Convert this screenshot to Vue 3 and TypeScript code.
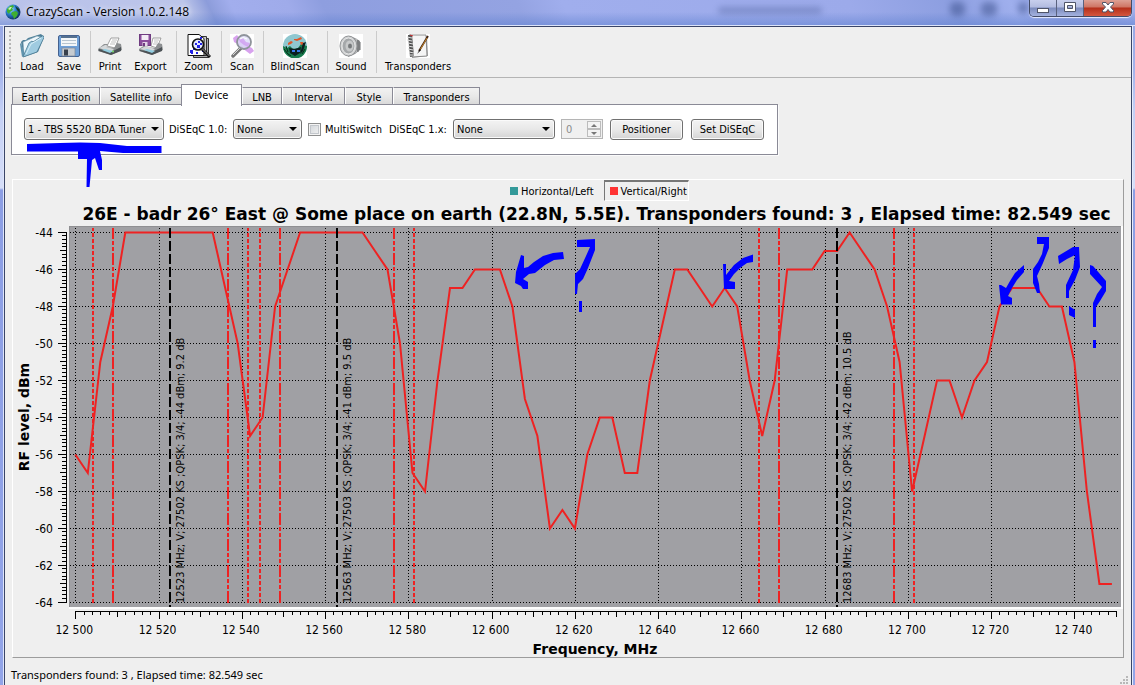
<script setup lang="ts">
import { ref } from 'vue'

interface Tab { label: string; active?: boolean }
interface Marker { x: number; kind: 'dash' | 'dashdot' }
interface Transponder { x: number; text: string }

const tabs: Tab[] = [
  { label: 'Earth position' },
  { label: 'Satellite info' },
  { label: 'Device', active: true },
  { label: 'LNB' },
  { label: 'Interval' },
  { label: 'Style' },
  { label: 'Transponders' },
]

const tuner = ref('1 - TBS 5520 BDA Tuner')
const diseqc10 = ref('None')
const diseqc1x = ref('None')
const multiSwitch = ref(false)
const position = ref(0)

const START = 12500
const freqX = (f: number): number => 75.3 + (f - START) * 4.163
const levelY = (l: number): number => 232.5 + (-44 - l) * 18.5

// One sample every 3 MHz
const levels: number[] = [
  -56, -57, -51, -48, -44, -44, -44, -44, -44, -44, -44, -44, -47, -50, -55, -54, -48, -46, -44, -44, -44,
  -44, -44, -44, -45, -46, -50, -57, -58, -52, -47, -47, -46, -46, -46, -48, -53, -55, -60, -59, -60,
  -56, -54, -54, -57, -57, -52, -49, -46, -46, -47, -48, -47, -48, -52, -55, -52, -46, -46, -46, -45,
  -45, -44, -45, -46, -48, -51, -58, -55, -52, -52, -54, -52, -51, -48, -47, -47, -47, -48, -48, -51,
  -58, -63, -63,
]
const trace = levels.map((l, i) => `${freqX(START + i * 3).toFixed(1)},${levelY(l).toFixed(1)}`).join(' ')

const xMajor = Array.from({ length: 13 }, (_, i) => START + i * 20)
const xTicks = Array.from({ length: 126 }, (_, i) => START + i * 2).map((f) => ({
  x: Math.round(freqX(f)),
  len: f % 20 === 0 ? 8 : f % 10 === 0 ? 6 : 4,
}))
const yMajor = Array.from({ length: 11 }, (_, i) => -44 - i * 2)
const yTicks = Array.from({ length: 101 }, (_, i) => ({
  y: Math.round(levelY(-44 - i / 5)),
  len: i % 10 === 0 ? 8 : i % 5 === 0 ? 6 : 4,
}))
const freqLabel = (f: number): string => `${Math.floor(f / 1000)} ${String(f % 1000).padStart(3, '0')}`

const markers: Marker[] = [
  { x: 93, kind: 'dash' }, { x: 113, kind: 'dashdot' },
  { x: 228, kind: 'dashdot' }, { x: 248, kind: 'dash' },
  { x: 260, kind: 'dash' }, { x: 280, kind: 'dashdot' },
  { x: 394, kind: 'dashdot' }, { x: 414, kind: 'dash' },
  { x: 759, kind: 'dash' }, { x: 779, kind: 'dashdot' },
  { x: 894, kind: 'dashdot' }, { x: 914, kind: 'dash' },
]
const transponders: Transponder[] = [
  { x: 170, text: '12523 MHz; V; 27502 KS ;QPSK; 3/4; -44 dBm; 9.2 dB' },
  { x: 337, text: '12563 MHz; V; 27503 KS ;QPSK; 3/4; -41 dBm; 9.5 dB' },
  { x: 837, text: '12683 MHz; V; 27502 KS ;QPSK; 3/4; -42 dBm; 10.5 dB' },
]
</script>

<template>
  <div class="window">
    <header class="titlebar">
      <svg class="app-icon" width="16" height="16" viewBox="0 0 16 16" aria-hidden="true">
        <defs>
          <radialGradient id="globe" cx="0.35" cy="0.3" r="0.8">
            <stop offset="0" stop-color="#b8e8ff" /><stop offset="0.4" stop-color="#2f86d8" /><stop offset="1" stop-color="#06204c" />
          </radialGradient>
        </defs>
        <circle cx="8" cy="8" r="7.5" fill="url(#globe)" />
        <path d="M2 5l3-3 3-1 1 2-2 1 1 2-3 2-1 2-2-2zM7 8l4-1 2 2-1 3-3 3-1-3-2-2z" fill="#3fae2f" />
        <path d="M10 2l4 3 1 4-3-3z" fill="#123a28" />
        <path d="M3 5l2-2 2 0-2 3z" fill="#c9f3b0" />
      </svg>
      <h1>CrazyScan - Version 1.0.2.148</h1>
      <div class="ghost" aria-hidden="true"><i class="g1"></i><i class="g2"></i><i class="g3"></i><i class="g4"></i></div>
      <div class="caption-buttons">
        <button type="button" class="cap" aria-label="Minimize">
          <svg width="12" height="11" viewBox="0 0 12 11"><rect x="0.5" y="6.5" width="11" height="4" fill="#fff" stroke="#4f5468" /></svg>
        </button>
        <button type="button" class="cap" aria-label="Maximize">
          <svg width="12" height="11" viewBox="0 0 12 11"><path fill-rule="evenodd" d="M.5.5h11v9H.5zM3.500 3.500v3h5v-3z" fill="#fff" stroke="#4f5468" /></svg>
        </button>
        <button type="button" class="cap close" aria-label="Close">
          <svg width="12" height="11" viewBox="0 0 12 11"><path d="M.5.5h3.500L6 3 8 .5h3.500v1.500L8.500 5l3 3.500v1.500H8L6 7.500 4 10H.5V8.500l3-3.500-3-3z" fill="#fff" stroke="#4f5468" /></svg>
        </button>
      </div>
    </header>

    <main class="client">
      <nav class="toolbar" aria-label="Main toolbar">
        <span class="grip"></span>
        <button type="button">
          <svg width="24" height="24" viewBox="0 0 24 24">
            <path d="M1 8l2-2 3 0 2-2 13-4 3 3-6 15-14 5z" fill="#4f7f98" />
            <path d="M3 8l14-6 4 1-6 14-11 4z" fill="#eef7fb" stroke="#7098ac" stroke-width=".6" />
            <path d="M1 9l4 12L2 23 0 10z" fill="#5f93ad" />
            <path d="M3 23L9 9l3-2 1 1 10-6.500 1 2L17 18z" fill="#9fcbe0" stroke="#497a92" stroke-width=".8" />
            <path d="M6 20l5-10 10-6" stroke="#d9f0f9" fill="none" />
          </svg>Load
        </button>
        <button type="button">
          <svg width="24" height="24" viewBox="0 0 24 24">
            <rect x="1.500" y="1.500" width="21" height="21" rx="1.500" fill="#6ea0d8" stroke="#44618f" />
            <rect x="4" y="2" width="16" height="10" fill="#f3f6f8" /><rect x="4" y="2" width="16" height="2" fill="#55708f" />
            <path d="M5 6.500h14M5 9.500h14" stroke="#b6c4d0" />
            <rect x="5" y="14" width="13" height="8" fill="#c6cbd0" stroke="#7b8797" stroke-width=".7" /><rect x="7" y="15.500" width="4" height="6" fill="#38404c" />
          </svg>Save
        </button>
        <span class="sep"></span>
        <button type="button">
          <svg width="24" height="24" viewBox="0 0 24 24">
            <path d="M9 12L13 4h8l-4 10z" fill="#fff" stroke="#8a8a8a" stroke-width=".8" /><path d="M14 6h5M13 8h5M12 10h5" stroke="#999" stroke-width=".6" />
            <path d="M0 15l6-5 4 0-2 3 8 1 3-5 4 1 1 6-11 5-13-4z" fill="#8d9092" />
            <path d="M1 14l6-3 2 0-1 2 8 2-3 3z" fill="#d5d8da" />
            <path d="M1 15l12 3 10-5v4l-10 4-12-4z" fill="#4c5256" /><path d="M4 16l8 3 3-2-8-2z" fill="#92cde0" /><circle cx="15" cy="17.500" r="1" fill="#7be06a" />
          </svg>Print
        </button>
        <button type="button">
          <svg width="24" height="24" viewBox="0 0 24 24">
            <path d="M12 12l2-8h8l-4 10z" fill="#fff" stroke="#8a8a8a" stroke-width=".8" /><path d="M15 6h5M15 8h4M14 10h4" stroke="#999" stroke-width=".6" />
            <path d="M0 15l6-4 4 0-2 2 8 1 3-5 4 1 1 6-11 5-13-4z" fill="#8d9092" /><path d="M1 15l6-3 9 3-3 3z" fill="#d5d8da" />
            <path d="M1 16l12 2 10-5v4l-10 4-12-4z" fill="#4c5256" /><path d="M5 16l8 3 3-2-8-2z" fill="#92cde0" />
            <rect x=".5" y=".5" width="11" height="11" fill="#8a4e9c" stroke="#6f3c80" /><rect x="2.500" y="1" width="7" height="5" fill="#f3ecf5" /><rect x="3.500" y="8" width="5" height="4" fill="#e3d6e8" /><rect x="4" y="9" width="2" height="3" fill="#6f3c80" />
          </svg>Export
        </button>
        <span class="sep"></span>
        <button type="button">
          <svg width="24" height="24" viewBox="0 0 24 24">
            <path d="M6.500 4.500h15v19h-15z" fill="#aaa" stroke="#333" /><path d="M4 2.500h15.500v19H4z" fill="#ccc" stroke="#333" />
            <path d="M1 .5h11l5 4v17H1z" fill="#fff" stroke="#111" />
            <path d="M3 16h3v3H3zM6 14h2v2H6zM13 3h2v2h-2zM9 18h2v2H9zM5 10h2v2H5zM15 16h2v2h-2zM4 19h2v1H4z" fill="#2323e8" />
            <circle cx="11" cy="10.500" r="5.500" fill="#e3e8ff" stroke="#111" stroke-width="1.600" />
            <path d="M8 9h2v2H8zM11 7h2v2h-2zM10 11h3v3h-3zM13 9h2v2h-2z" fill="#2323e8" />
            <path d="M15 15l8 8" stroke="#111" stroke-width="3" /><path d="M15.500 15l7 7" stroke="#999" />
          </svg>Zoom
        </button>
        <span class="sep"></span>
        <button type="button">
          <svg width="24" height="24" viewBox="0 0 24 24">
            <rect width="24" height="24" fill="#fff" />
            <path d="M3 4l4-3 3 4 8 7 4 2 2 3-4 3-4-3-7-6-5-3z" fill="#d8a2ee" />
            <path d="M3 22l8-8" stroke="#777" stroke-width="3.500" stroke-linecap="round" /><path d="M3 21l7-7" stroke="#d8d8d8" />
            <circle cx="14" cy="8" r="7" fill="#dcdcf8" fill-opacity=".8" stroke="#8f949b" stroke-width="1.800" />
            <path d="M9 5l4-1 3 4 4 1-2 4-4-2-4-3z" fill="#cf9df0" opacity=".8" /><path d="M10 5q3-3 7 0" stroke="#fff" fill="none" />
          </svg>Scan
        </button>
        <span class="sep"></span>
        <button type="button">
          <svg width="24" height="24" viewBox="0 0 24 24">
            <rect width="24" height="24" fill="#fff" /><circle cx="12" cy="12" r="12" fill="#8fc7cf" />
            <path d="M0 12l4 2 3-2 3 3 5-1 3-4 6 2a12 12 0 0 1-24 1z" fill="#177a4c" />
            <path d="M5 9l3-2 2 1-2 2-3 1zM11 5l3 0 4-2 1 2-5 2-3-1zM17 8l3 0 1 2-3 1z" fill="#e0562a" />
            <path d="M6 14l6 1 6-2-1 6-5 3-5-3zM20 9l3-1-3 9-3 3z" fill="#0b1d20" />
            <path d="M9 16h3v2H9zM14 16h3v2h-3z" fill="#3a7be8" /><path d="M1 15l4 5 3 2M3 12l2 6M19 20l3-5" stroke="#052d18" fill="none" />
          </svg>BlindScan
        </button>
        <span class="sep"></span>
        <button type="button">
          <svg width="24" height="24" viewBox="0 0 24 24">
            <rect width="24" height="24" fill="#fff" />
            <path d="M10 2l6 2 5 3v9l-5 4-7 3z" fill="#8d8f91" />
            <path d="M16 4l2 1v13l-2 2z" fill="#b8babb" /><path d="M19 6v12M21 8v8" stroke="#6d6f71" />
            <ellipse cx="9.500" cy="12" rx="8.500" ry="10" fill="#cfd1d2" stroke="#929496" /><ellipse cx="9.500" cy="12" rx="6.500" ry="8" fill="#a5a8aa" stroke="#e8e8e8" /><ellipse cx="10.500" cy="12" rx="4" ry="5.500" fill="#c7c9ca" /><ellipse cx="11" cy="12" rx="2" ry="2.500" fill="#777a7c" />
          </svg>Sound
        </button>
        <span class="sep"></span>
        <button type="button">
          <svg width="24" height="24" viewBox="0 0 24 24">
            <rect width="24" height="24" fill="#fff" />
            <path d="M4 1l17 1 1 20-16 2z" fill="#aaa" /><path d="M3 1l17 0 1 21-15 1z" fill="#f5f5f5" stroke="#777" stroke-width=".8" />
            <path d="M2 1h4l2 21-4 1z" fill="#555" /><path d="M1 3l5 1M1 6l5 1M2 9l5 1M2 12l5 1M2 15l5 1M3 18l5 1M3 21l5 0" stroke="#ddd" />
            <path d="M4 1l3 1" stroke="#c33" /><path d="M22 2L13 17" stroke="#402414" stroke-width="1.800" /><path d="M21 4l-7 12" stroke="#d2902c" stroke-width=".9" /><path d="M14 15l-3 5 4-4z" fill="#111" />
          </svg>Transponders
        </button>
      </nav>

      <section class="settings">
        <div class="tabs" role="tablist">
          <button v-for="t in tabs" :key="t.label" type="button" role="tab" :aria-selected="!!t.active" :class="{ active: t.active }">{{ t.label }}</button>
        </div>
        <form class="device" @submit.prevent>
          <span class="select tuner"><select v-model="tuner" aria-label="Tuner"><option>1 - TBS 5520 BDA Tuner</option></select></span>
          <label class="caption" for="d10">DiSEqC 1.0:</label>
          <span class="select small"><select id="d10" v-model="diseqc10"><option>None</option></select></span>
          <label class="check"><input v-model="multiSwitch" type="checkbox" />MultiSwitch</label>
          <label class="caption" for="d1x">DiSEqC 1.x:</label>
          <span class="select wide"><select id="d1x" v-model="diseqc1x"><option>None</option></select></span>
          <span class="spin">
            <input v-model="position" type="number" disabled aria-label="Position" />
            <span class="arrows"><button type="button" disabled aria-label="Increase"><i class="up"></i></button><button type="button" disabled aria-label="Decrease"><i class="down"></i></button></span>
          </span>
          <button type="button" class="push">Positioner</button>
          <button type="button" class="push">Set DiSEqC</button>
          <svg class="pen" width="140" height="46" viewBox="24 142 140 46" aria-hidden="true">
            <path d="M27 144L60 143 80 142.500 100 143 127 146H161.500V153H123L100 151 102 160V170H99L95 158 92 160 89.500 187H86.500L87 159H78V151.500H27z" />
          </svg>
        </form>
      </section>

      <section class="chart">
        <div class="legend">
          <button type="button"><i class="teal"></i>Horizontal/Left</button>
          <button type="button" class="pressed"><i class="red"></i>Vertical/Right</button>
        </div>
        <h2>26E - badr 26° East @ Some place on earth (22.8N, 5.5E). Transponders found: 3 , Elapsed time: 82.549 sec</h2>
        <svg class="plot" viewBox="13 226 1110 431" role="img" aria-label="RF level by frequency">
          <g shape-rendering="crispEdges">
            <rect x="69" y="226" width="1054" height="383" fill="#fff" />
            <rect x="69" y="226" width="1052" height="381" fill="#a0a0a4" />
            <path d="M69 226.500H1121M69.500 226V607" stroke="#8f8f92" />
            <line v-for="l in yMajor" :key="'gy' + l" class="grid" x1="70" x2="1119" :y1="Math.round(levelY(l)) - 0.5" :y2="Math.round(levelY(l)) - 0.5" />
            <line v-for="f in xMajor" :key="'gx' + f" class="grid" :x1="Math.round(freqX(f)) + 0.5" :x2="Math.round(freqX(f)) + 0.5" y1="228" y2="603" />
          </g>
          <polyline class="trace" :points="trace" />
          <g shape-rendering="crispEdges">
            <line v-for="m in markers" :key="m.x" class="marker" :class="m.kind" :x1="m.x" :x2="m.x" y1="603" y2="228" />
            <line v-for="t in transponders" :key="t.x" class="carrier" :x1="t.x" :x2="t.x" y1="228" y2="607" />
          </g>
          <text v-for="t in transponders" :key="'t' + t.x" class="note" :transform="`translate(${t.x + 14} 603) rotate(-90)`">{{ t.text }}</text>

          <g shape-rendering="crispEdges" class="axis">
            <path d="M66.500 232V603M75 611.500H1116" />
            <line v-for="t in yTicks" :key="'y' + t.y" :x1="66 - t.len" x2="66" :y1="t.y - 0.5" :y2="t.y - 0.5" />
            <line v-for="t in xTicks" :key="'x' + t.x" :x1="t.x + 0.5" :x2="t.x + 0.5" y1="611" :y2="611 + t.len" />
          </g>
          <text v-for="l in yMajor" :key="'ly' + l" class="tick" text-anchor="end" x="53" :y="levelY(l) + 4">{{ l }}</text>
          <text v-for="f in xMajor" :key="'lx' + f" class="tick" text-anchor="middle" :x="freqX(f) - 1" y="634">{{ freqLabel(f) }}</text>
          <text class="axis-title" text-anchor="middle" transform="translate(29 417) rotate(-90)">RF level, dBm</text>
          <text class="axis-title" text-anchor="middle" x="595" y="654">Frequency, MHz</text>

          <g class="ink">
            <path d="M563 252L553 253 543 256 534 262 528 267 524 268 524 256 521 255 516 272 515 283 521 286 523 289H528V282L523 279 529 274 535 273 545 265 554 260 564 259z" />
            <path d="M577 240L595 239V250L588 268 583 279 578 284 577 294H575V274L580 269 586 256 590 247H577zM579 301h3v11h-3z" />
            <path d="M753 254.500L743 258 734 265 726 275V264H723L724 289H735V282L729 281 734 274 740 268 747 263 753 262z" />
            <path d="M1024 265L1015 273 1010 281 1006 288 1001 285H999L1001 304.500H1012V298L1008 296 1012 288 1017 280 1024 272z" />
            <path d="M1037 237H1049V248L1043 263 1037 276 1039 284 1040 293H1037L1033 283V269L1038 262 1042 254 1044 244H1037z" />
            <path d="M1058 256L1073 247 1079 247 1080 267 1075 280 1069 291V298H1066V285L1073 270 1075 255 1067 259 1059 264zM1069 306L1075 310V318L1069 315z" />
            <path d="M1090 265L1093 266 1106 281V291L1100 301 1096 307V327H1093V303L1097 294 1102 287 1090 274zM1093 340h3v8h-3z" />
          </g>
        </svg>
      </section>

      <footer class="status">
        <span>Transponders found: 3 , Elapsed time: 82.549 sec</span>
        <svg width="9" height="9" viewBox="0 0 9 9" aria-hidden="true"><path d="M6 0h2v2H6zM3 3h2v2H3zM6 3h2v2H6zM0 6h2v2H0zM3 6h2v2H3zM6 6h2v2H6z" fill="#b8b8b8" /></svg>
      </footer>
    </main>
  </div>
</template>

<style>
body { margin: 0; }
</style>

<style scoped>
* { box-sizing: border-box; }
.window {
  min-height: 100vh;
  display: flex;
  flex-direction: column;
  padding: 0 3px 0 4px;
  background: linear-gradient(#93a2df 0, #a3b3ec 70px, #c3cff5 110px, #d6def8 188px, #8c9ee4 190px, #92a4e8 100%);
  font: 11px "DejaVu Sans Condensed", "DejaVu Sans", sans-serif;
  color: #000;
}
button, input, select { font: inherit; color: inherit; }
button { padding: 0; border: 0; background: none; }
.titlebar {
  height: 26px;
  margin: 0 -3px 0 -4px;
  padding: 0 3px 0 5px;
  display: flex;
  align-items: center;
  position: relative;
  background:
    linear-gradient(transparent 12px, rgba(90, 125, 205, 0.5) 25px, #dce4fa 25px),
    linear-gradient(65deg, #b9c2ea 0, #bcc5ea 17%, #8c9cda 19%, #a2aeed 21%, #9fabea 26%, #8e9edf 29%, #94a3e2 46%, #a0aeed 50%, #9caaea 75%, #8c9ee0 84%, #9fafed 89%, #8e9fe0 93%, #a0aeeb 100%);
}
.app-icon { flex: none; margin: -2px 5px 0 0; }
h1 {
  margin: -3px 0 0;
  font: 12px "Open Sans", "Noto Sans", sans-serif;
  text-shadow: 0 0 6px #fff;
}
.ghost i { position: absolute; background: #2f447f; filter: blur(3px); border-radius: 5px; opacity: 0.45; }
.ghost .g1 { left: 718px; top: 7px; width: 104px; height: 7px; opacity: 0.3; }
.ghost .g2 { left: 950px; top: 2px; width: 15px; height: 14px; }
.ghost .g3 { left: 981px; top: 2px; width: 16px; height: 14px; }
.ghost .g4 { left: 1018px; top: 2px; width: 10px; height: 12px; }
.caption-buttons {
  align-self: flex-start;
  margin-left: auto;
  height: 17px;
  display: flex;
  position: relative;
  border: 1px solid #434b66;
  border-top: 0;
  border-radius: 0 0 5px 5px;
  overflow: hidden;
  box-shadow: 0 1px 1px #e8edff;
}
.cap {
  width: 27px;
  height: 16px;
  padding: 2px 0 0;
  display: flex;
  justify-content: center;
  border-right: 1px solid #59617e;
  background: linear-gradient(#c8cfed 0, #b3bce0 7px, #7c8bbd 8px, #a4b2df 100%);
}
.cap.close { width: 47px; border-right: 0; background: linear-gradient(#dda094 0, #cf7564 7px, #b52f1a 8px, #d4573f 100%); }
.client {
  flex: 1;
  display: flex;
  flex-direction: column;
  background: #efefef;
  border: 1px solid #3a4568;
  border-bottom: 0;
  box-shadow: -1px 0 #dfe6fb, 1px 0 #e6ecfc;
}
.toolbar {
  display: grid;
  grid-template-columns: 6px 36px 38px 4px 36px 45px 6px 39px 6px 36px 6px 58px 6px 42px 8px 76px;
  padding: 7px 0 0 3px;
  height: 51px;
  border-bottom: 1px solid #b4b4b4;
}
.grip { width: 2px; height: 40px; margin: -3px 0 0 1px; background: repeating-linear-gradient(#b4b4b4 0 2px, transparent 2px 4px); }
.toolbar button { height: 40px; display: flex; flex-direction: column; align-items: center; gap: 2px; line-height: 14px; white-space: nowrap; }
.toolbar svg { display: block; flex: none; }
.sep { width: 1px; height: 42px; margin-top: -3px; justify-self: center; background: #cbcbcb; }
.settings { padding: 6px 6px 0; }
.tabs {
  display: grid;
  grid-template-columns: 88px 82px 60px 40px 63px 48px 87px;
  align-items: end;
  height: 20px;
  padding-left: 1px;
}
.tabs button {
  height: 18px;
  border: 1px solid #8a8a96;
  border-bottom: 0;
  border-left-color: #fff;
  background: linear-gradient(#f2f2f2, #e8e8e8 50%, #d8d8d8);
  line-height: 19px;
  white-space: nowrap;
}
.tabs button:first-child { border-left-color: #8a8a96; }
.tabs button.active { height: 22px; margin-bottom: -1px; margin-left: -1px; border-left-color: #8a8a96; background: #fff; position: relative; z-index: 1; line-height: 20px; }
.device {
  position: relative;
  width: fit-content;
  height: 51px;
  display: flex;
  align-items: center;
  padding: 0 13px 1px 12px;
  border: 1px solid #8a8a96;
  background: #fff;
  box-shadow: 1px 1px #fbfbfb;
  white-space: nowrap;
}
.select { position: relative; display: block; height: 20px; }
.select select {
  display: block;
  width: 100%;
  height: 100%;
  appearance: none;
  padding: 0 3px;
  border: 1px solid #707070;
  border-radius: 3px;
  background: linear-gradient(#f3f3f3, #e8e8e8 50%, #d4d4d4);
  box-shadow: inset 0 0 0 1px #fafafa;
}
.select::after { content: ""; position: absolute; right: 5px; top: 8px; border: 4px solid transparent; border-top-color: #000; border-bottom: 0; pointer-events: none; }
.tuner { width: 140px; }
.tuner, .tuner select { height: 22px; }
.tuner::after { top: 9px; }
.small { width: 69px; }
.wide { width: 102px; }
.caption { width: 67px; padding-left: 5px; margin-right: 2px; }
.check { display: flex; align-items: center; gap: 4px; width: 76px; margin-left: 6px; }
.check input { appearance: none; flex: none; width: 13px; height: 13px; margin: 0; border: 1px solid #8e8f8f; background: linear-gradient(135deg, #cfd3d8, #f4f4f4); box-shadow: inset 0 0 0 1px #f4f4f4, inset 0 0 0 2px #c3c7cc; }
.spin { width: 42px; height: 20px; margin: 0 7px 0 6px; display: flex; border: 1px solid #b5b5b5; background: #f0f0f0; padding: 1px; }
.spin input { flex: 1; width: 20px; min-width: 0; padding: 0 3px; border: 0; background: none; color: #8c8c8c; appearance: textfield; }
.spin input::-webkit-inner-spin-button { display: none; }
.arrows { width: 14px; display: flex; flex-direction: column; }
.arrows button { flex: 1; display: flex; align-items: center; justify-content: center; border: 1px solid #bcbcbc; background: #f3f3f3; }
.arrows i { border: 3px solid transparent; }
.arrows .up { border-bottom-color: #777; border-top: 0; }
.arrows .down { border-top-color: #777; border-bottom: 0; }
.push {
  width: 73px;
  height: 21px;
  border: 1px solid #707070;
  border-radius: 3px;
  background: linear-gradient(#f3f3f3, #e9e9e9 50%, #d4d4d4);
  box-shadow: inset 0 0 0 1px #fafafa;
}
.push + .push { margin-left: 8px; }
.pen { position: absolute; left: 12px; top: 37px; pointer-events: none; fill: #00f; }
.chart {
  margin: 24px 7px 0;
  border: 1px solid #fff;
  border-right-color: #9c9c9c;
  border-bottom-color: #9c9c9c;
}
.legend { height: 22px; display: flex; justify-content: center; gap: 9px; margin-left: 62px; }
.legend button { height: 21px; display: flex; align-items: center; gap: 3px; border: 1px solid transparent; border-width: 1px 1px 0; }
.legend .pressed { padding: 0 1px 0 5px; border-width: 2px 1px 1px; border-color: #777 #fff #fff #777; }
.legend i { width: 8px; height: 8px; }
.teal { background: #339999; }
.red { background: #ff3333; }
h2 { margin: 0; padding-left: 57px; text-align: center; font: bold 17px/24px "DejaVu Sans", sans-serif; white-space: nowrap; }
.plot { display: block; width: 100%; height: auto; }
.grid { stroke: #000; stroke-dasharray: 1 2; }
.trace { fill: none; stroke: #ee2222; stroke-width: 2; }
.marker { stroke: #ee2222; stroke-width: 2; }
.dash { stroke-dasharray: 4 2; }
.dashdot { stroke-dasharray: 12 2 4 2 4 2; }
.carrier { stroke: #000; stroke-width: 2; stroke-dasharray: 10 3; }
.note { font-size: 11px; }
.axis { stroke: #000; fill: none; }
.tick { font-size: 12px; }
.axis-title { font: bold 14px "DejaVu Sans", sans-serif; }
.ink { fill: #00f; }
.status { flex: 1; display: flex; align-items: center; justify-content: space-between; padding: 6px 2px 0 6px; min-height: 27px; font: 11px "Noto Sans", "Open Sans", sans-serif; }
.status svg { align-self: flex-end; }
</style>
